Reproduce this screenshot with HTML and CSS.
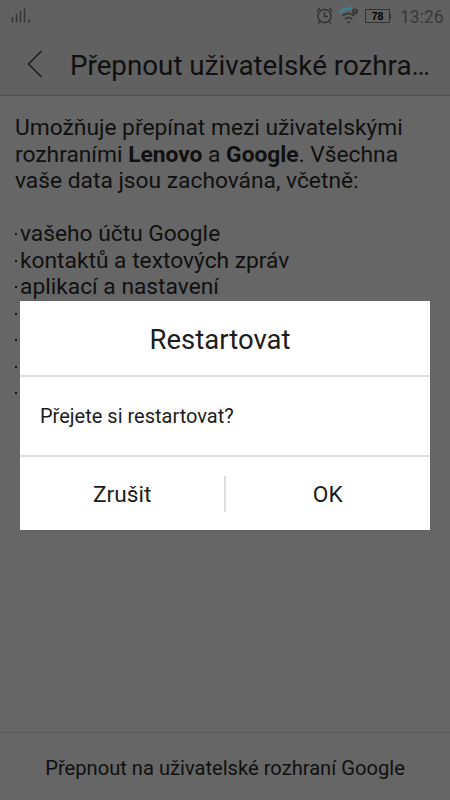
FILE: index.html
```html
<!DOCTYPE html>
<html lang="cs">
<head>
<meta charset="utf-8">
<title>Přepnout uživatelské rozhraní</title>
<link rel="stylesheet" href="styles.css">
</head>
<body>
<div class="screen">
  <header class="top">
    <div class="status">
      <svg class="signal" width="22" height="18" viewBox="0 0 22 18"><path d="M2.500 10v5.500M6.500 7v8.500M10.500 4v11.500M14.500 1.500v14M19 12v4" stroke="#333" stroke-width="1.400" fill="none"/></svg>
      <div class="indicators">
        <svg class="alarm" width="17" height="18" viewBox="0 0 17 18" fill="none" stroke="#333" stroke-width="1.500"><circle cx="8.500" cy="9" r="6.600"/><path d="M8.500 5v4.500h3.500M.8 4l3-2.800M13.200 1.200l3 2.800M4 14.500l-1.800 2M13 14.500l1.800 2"/></svg>
        <svg class="wifi" width="20" height="18" viewBox="0 0 20 18" fill="none" stroke="#383838" stroke-width="1.800"><path d="M1 5.200Q6 .2 13 1.700" stroke="#3183a8" stroke-width="2.200"/><path d="M3.500 8.700Q9.500 4 15.200 8.700M6 12Q9.500 9.300 13.300 12"/><circle cx="16" cy="4.500" r="2.300" fill="#484848" stroke-width="1.500"/><circle cx="9.700" cy="15.200" r="1.300" fill="#383838" stroke="none"/></svg>
        <span class="battery">78</span>
        <span class="clock">13:26</span>
      </div>
    </div>
    <div class="titlebar">
      <svg class="back" width="16" height="28" viewBox="0 0 16 28"><path d="M14.500 1L1.500 14l13 13" fill="none" stroke="#1d1d1d" stroke-width="1.500"/></svg>
      <h1>Přepnout uživatelské rozhra…</h1>
    </div>
  </header>
  <main class="content">
    <p>Umožňuje přepínat mezi uživatelskými</p>
    <p>rozhraními <b>Lenovo</b> a <b>Google</b>. Všechna</p>
    <p>vaše data jsou zachována, včetně:</p>
    <ul>
      <li>vašeho účtu Google</li>
      <li>kontaktů a textových zpráv</li>
      <li>aplikací a nastavení</li>
      <li></li>
      <li></li>
      <li></li>
      <li></li>
    </ul>
  </main>
  <footer class="switch">Přepnout na uživatelské rozhraní Google</footer>
  <section class="dialog" role="dialog">
    <h2>Restartovat</h2>
    <p class="message">Přejete si restartovat?</p>
    <div class="actions">
      <button class="cancel">Zrušit</button>
      <button class="ok">OK</button>
    </div>
  </section>
</div>
</body>
</html>
```

FILE: styles.css
```css
* { box-sizing: border-box; }
body { margin: 0; font-family: Roboto, "Liberation Sans", sans-serif; }
h1, h2, p, ul { margin: 0; padding: 0; font-weight: 400; }
.screen { position: relative; width: 450px; height: 800px; overflow: hidden; display: flex; flex-direction: column; background: #666; color: #101010; }
.top { height: 96px; background: #616161; border-bottom: 1px solid #505050; }
.status { height: 32px; display: flex; justify-content: space-between; padding: 7px 7px 0 10px; }
.indicators { display: flex; align-items: flex-start; }
.wifi { margin-left: 6px; }
.battery { position: relative; width: 25px; height: 14px; margin: 2px 0 0 6px; border: 1px solid #333; font: 700 10.500px/12px "Liberation Sans", sans-serif; text-align: center; color: #000; }
.battery::after { content: ""; position: absolute; right: -2px; top: 4px; width: 1px; height: 5px; background: #333; }
.clock { width: 43px; margin-left: 10px; font-size: 17.500px; line-height: 20px; color: #383838; white-space: nowrap; }
.titlebar { height: 63px; display: flex; align-items: center; padding-left: 27px; }
.titlebar h1 { margin-left: 27px; font-size: 27.750px; line-height: 36px; white-space: nowrap; margin-top: 5px; }
.content { flex: 1; padding: 19px 15px 0; font-size: 22.780px; line-height: 26.500px; white-space: nowrap; }
ul { margin-top: 26.500px; list-style: none; }
li { height: 26.500px; padding-left: 5px; position: relative; }
li::before { content: ""; position: absolute; left: 0; top: 12px; width: 2px; height: 2px; background: #141414; }
.switch { height: 68px; border-top: 1px solid #5b5b5b; font-size: 20.150px; line-height: 71px; text-align: center; }
.dialog { position: absolute; left: 20px; top: 301px; width: 410px; height: 229px; background: #fff; color: #1c1c1c; }
.dialog h2 { height: 74px; padding-right: 10px; text-align: center; font-size: 27.500px; line-height: 77px; }
.message { height: 80px; padding-left: 20px; border-top: 2px solid #dedede; font-size: 20px; line-height: 79px; }
.actions { height: 75px; display: flex; align-items: center; border-top: 2px solid #dedede; }
.actions button { flex: 1; height: 36px; padding: 0; border: 0; background: none; color: inherit; font: 22.700px/38px Roboto, sans-serif; }
.actions .ok { margin-left: -1px; border-left: 2px solid #dedede; }
```
